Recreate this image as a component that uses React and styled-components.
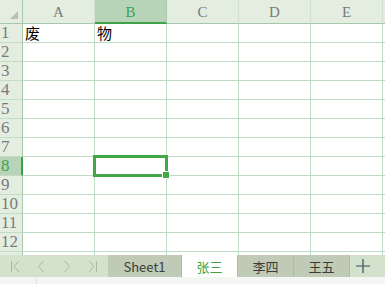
import React from "react";
import styled, { createGlobalStyle, css } from "styled-components";

const Global = createGlobalStyle`
  html, body { margin: 0; padding: 0; background: #ffffff; }
  body { width: 385px; height: 284px; overflow: hidden; }
`;

const Page = styled.div`
  width: 385px;
  height: 284px;
  display: flex;
  flex-direction: column;
  overflow: hidden;
`;

const Sheet = styled.div`
  height: 255px;
  overflow: hidden;
  display: grid;
  grid-template-columns: 23px repeat(5, 72px) 1fr;
  grid-template-rows: 24px repeat(13, 19px);
`;

const GRID = "#bcdcc3";
const SEL = "#3fa24a";
const SELBG = "#b7d4b9";

const Corner = styled.div`
  background: #e3eee1;
  border-right: 1px solid #a9c7ad;
  border-bottom: 1px solid #a9c7ad;
  box-sizing: border-box;
  position: relative;
  &::after {
    content: "";
    position: absolute;
    right: 4px;
    bottom: 4px;
    width: 0;
    height: 0;
    border-left: 8px solid transparent;
    border-bottom: 8px solid #b9bfb8;
  }
`;

const ColHead = styled.div`
  box-sizing: border-box;
  background: ${(p) => (p.$sel ? SELBG : "#e3eee1")};
  border-right: 1px solid ${(p) => (p.$sel ? "#a6c9aa" : "#cfe0cd")};
  border-bottom: ${(p) => (p.$sel ? `2px solid ${SEL}` : "1px solid #a9c7ad")};
  display: flex;
  align-items: center;
  justify-content: center;
  padding-top: ${(p) => (p.$sel ? "3px" : "2px")};
  font-family: "Liberation Serif", "Times New Roman", serif;
  font-size: 15px;
  color: ${(p) => (p.$sel ? SEL : "#7a7a7a")};
`;

const RowHead = styled.div`
  box-sizing: border-box;
  background: ${(p) => (p.$sel ? SELBG : "#e3eee1")};
  border-right: ${(p) => (p.$sel ? `2px solid ${SEL}` : "1px solid #a9c7ad")};
  border-bottom: 1px solid #c4dcc6;
  display: flex;
  align-items: center;
  padding-left: 1px;
  font-family: "Liberation Serif", "Times New Roman", serif;
  font-size: 17px;
  color: ${(p) => (p.$sel ? SEL : "#7a7a7a")};
`;

const Cell = styled.div`
  box-sizing: border-box;
  border-right: 1px solid ${GRID};
  border-bottom: 1px solid ${GRID};
  position: relative;
  display: flex;
  align-items: flex-end;
  padding-left: 2px;
  font-family: "Noto Sans CJK SC", "Noto Sans", sans-serif;
  font-size: 15px;
  line-height: 18px;
  color: #000;
`;

const Selection = styled.div`
  position: absolute;
  left: -2px;
  top: -2px;
  right: -2px;
  bottom: -2px;
  border: 3px solid #42a847;
  pointer-events: none;
  z-index: 2;
  &::after {
    content: "";
    position: absolute;
    right: -5px;
    bottom: -5px;
    width: 6px;
    height: 6px;
    background: #42a847;
    border: 1px solid #fff;
  }
`;

const TabBar = styled.div`
  height: 22px;
  background: #d3e2cc;
  display: flex;
  align-items: stretch;
`;

const Nav = styled.div`
  width: 108px;
  display: flex;
  align-items: center;
  justify-content: space-around;
  padding: 0 2px;
  box-sizing: border-box;
`;

const Tab = styled.div`
  width: ${(p) => p.$w}px;
  box-sizing: border-box;
  display: flex;
  align-items: center;
  justify-content: center;
  font-family: "Noto Sans CJK SC", "Noto Sans", sans-serif;
  font-size: 13px;
  border-right: 1px solid #aebba6;
  ${(p) =>
    p.$active
      ? css`
          background: #ffffff;
          color: #3aa53a;
        `
      : css`
          background: #bfcbb6;
          color: #3b3b3b;
        `}
`;

const AddTab = styled.div`
  width: 26px;
  display: flex;
  align-items: center;
  justify-content: center;
`;

const StatusStrip = styled.div`
  flex: 1;
  background: #f4f6f3;
  display: flex;
`;

const StripDivider = styled.div`
  width: 36px;
  border-right: 1px solid #dde2dc;
`;

const Stroke = "#a8b8a3";

const NavIcon = ({ kind }) => (
  <svg width="12" height="13" viewBox="0 0 12 13" fill="none" stroke={Stroke} strokeWidth="1">
    {kind === "first" && (
      <>
        <path d="M2.5 1v11" />
        <path d="M10 1L5 6.5l5 5.5" />
      </>
    )}
    {kind === "prev" && <path d="M8.5 1L3.5 6.5l5 5.5" />}
    {kind === "next" && <path d="M3.5 1l5 5.5-5 5.5" />}
    {kind === "last" && (
      <>
        <path d="M2 1l5 5.5-5 5.5" />
        <path d="M9.5 1v11" />
      </>
    )}
  </svg>
);

const cols = ["A", "B", "C", "D", "E"];
const rows = Array.from({ length: 13 }, (_, i) => i + 1);

export default function App() {
  return (
    <Page>
      <Global />
      <Sheet>
        <Corner />
        {cols.map((c) => (
          <ColHead key={c} $sel={c === "B"}>
            {c}
          </ColHead>
        ))}
        <ColHead />
        {rows.map((r) => (
          <React.Fragment key={r}>
            <RowHead $sel={r === 8}>{r <= 12 ? r : ""}</RowHead>
            {cols.map((c) => (
              <Cell key={c}>
                {r === 1 && c === "A" && "废"}
                {r === 1 && c === "B" && "物"}
                {r === 8 && c === "B" && <Selection />}
              </Cell>
            ))}
            <Cell />
          </React.Fragment>
        ))}
      </Sheet>
      <TabBar>
        <Nav>
          <NavIcon kind="first" />
          <NavIcon kind="prev" />
          <NavIcon kind="next" />
          <NavIcon kind="last" />
        </Nav>
        <Tab $w={74}>Sheet1</Tab>
        <Tab $w={56} $active>
          张三
        </Tab>
        <Tab $w={56}>李四</Tab>
        <Tab $w={56}>王五</Tab>
        <AddTab>
          <svg width="14" height="14" viewBox="0 0 14 14" stroke="#3b4a5c" strokeWidth="1.2">
            <path d="M7 0v14M0 7h14" />
          </svg>
        </AddTab>
      </TabBar>
      <StatusStrip>
        <StripDivider />
      </StatusStrip>
    </Page>
  );
}
